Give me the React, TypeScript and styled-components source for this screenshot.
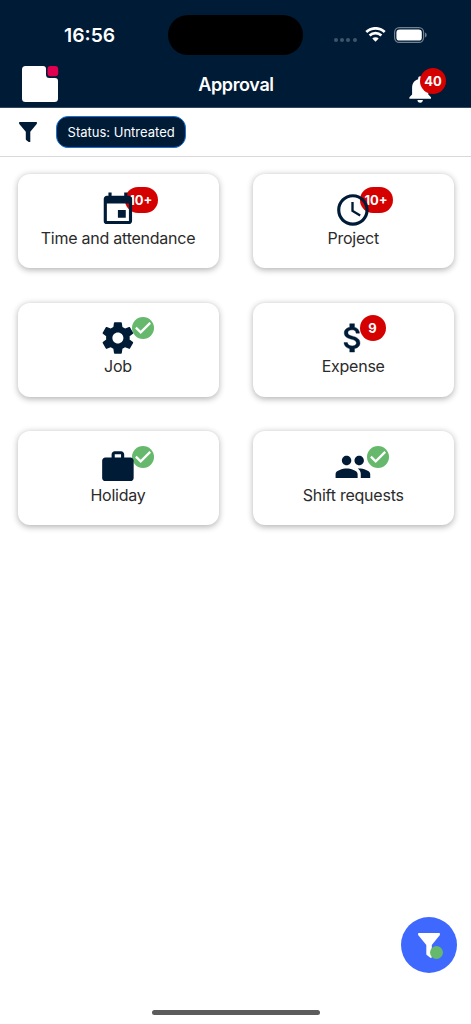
import type { ReactNode } from "react";
import styled, { createGlobalStyle } from "styled-components";
import { MdEvent, MdNotifications, MdPeople, MdWork } from "react-icons/md";

const NAVY = "#001b36";

interface Tile {
  label: string;
  icon: ReactNode;
  count?: string;
}

const ClockIcon = () => (
  <svg viewBox="0 0 24 24" fill="currentColor">
    <path d="M11.99 2C6.47 2 2 6.48 2 12s4.47 10 9.99 10C17.52 22 22 17.52 22 12S17.52 2 11.99 2zM12 20c-4.42 0-8-3.58-8-8s3.58-8 8-8 8 3.58 8 8-3.58 8-8 8z" />
    <path d="M12.5 7H11v6l5.25 3.15.75-1.23-4.5-2.67z" />
  </svg>
);

const GearIcon = () => (
  <svg viewBox="0 0 24 24" fill="currentColor">
    <path d="M19.43 12.98c.04-.32.07-.64.07-.98s-.03-.66-.07-.98l2.11-1.65c.19-.15.24-.42.12-.64l-2-3.46c-.12-.22-.39-.3-.61-.22l-2.49 1c-.52-.4-1.08-.73-1.69-.98l-.38-2.65C14.46 2.18 14.25 2 14 2h-4c-.25 0-.46.18-.49.42l-.38 2.65c-.61.25-1.17.59-1.69.98l-2.49-1c-.23-.09-.49 0-.61.22l-2 3.46c-.13.22-.07.49.12.64l2.11 1.65c-.04.32-.07.65-.07.98s.03.66.07.98l-2.11 1.65c-.19.15-.24.42-.12.64l2 3.46c.12.22.39.3.61.22l2.49-1c.52.4 1.08.73 1.69.98l.38 2.65c.03.24.24.42.49.42h4c.25 0 .46-.18.49-.42l.38-2.65c.61-.25 1.17-.59 1.69-.98l2.49 1c.23.09.49 0 .61-.22l2-3.46c.12-.22.07-.49-.12-.64l-2.11-1.65zM12 15.5c-1.93 0-3.5-1.57-3.5-3.5s1.57-3.5 3.5-3.5 3.5 1.57 3.5 3.5-1.57 3.5-3.5 3.5z" />
  </svg>
);

const DollarIcon = () => (
  <svg viewBox="0 0 24 24" fill="currentColor" stroke="currentColor" strokeWidth=".25">
    <path d="M11.8 10.9c-2.27-.59-3-1.2-3-2.15 0-1.09 1.01-1.85 2.7-1.85 1.78 0 2.44.85 2.5 2.1h2.21c-.07-1.72-1.12-3.3-3.21-3.81V3h-3v2.16c-1.94.42-3.5 1.68-3.5 3.61 0 2.31 1.91 3.46 4.7 4.13 2.5.6 3 1.48 3 2.41 0 .69-.49 1.79-2.7 1.79-2.06 0-2.87-.92-2.98-2.1h-2.2c.12 2.19 1.76 3.42 3.68 3.83V21h3v-2.15c1.95-.37 3.5-1.5 3.5-3.55 0-2.84-2.43-3.81-4.7-4.4z" />
  </svg>
);

const FunnelIcon = ({ width }: { width: number }) => (
  <svg width={width} viewBox="0 0 18 20.5" fill="currentColor">
    <path d="M.7 0h16.6c.6 0 .9.6.6 1.1v.6L11.3 9.8v9.8c0 .7-.6 1-1.2.7L7.4 18.2c-.4-.3-.6-.6-.6-1.1V9.8L.1 1.7v-.6C-.2.6.1 0 .7 0z" />
  </svg>
);

const Logo = () => (
  <svg width="37" height="37" viewBox="0 0 37 37">
    <path
      fill="#fff"
      d="M3.5 0H21a3 3 0 0 1 3 3v5.5a3.5 3.5 0 0 0 3.5 3.5H33a3 3 0 0 1 3 3v17.5a3.5 3.5 0 0 1-3.5 3.5h-29A3.5 3.5 0 0 1 0 32.5v-29A3.5 3.5 0 0 1 3.5 0z"
    />
    <rect x="25.5" y="0" width="10.7" height="10.3" rx="3" fill="#e0004f" />
  </svg>
);

const WifiIcon = () => (
  <svg width="21" height="15" viewBox="0 0 21 15" fill="none" stroke="#fff">
    <path d="M1.3 5a13.3 13.3 0 0 1 18.4 0" strokeWidth="2.7" />
    <path d="M4.6 8.5a8.5 8.5 0 0 1 11.8 0" strokeWidth="2.6" />
    <path d="M10.5 14.8 7.3 11.6a4.6 4.6 0 0 1 6.4 0z" fill="#fff" stroke="none" />
  </svg>
);

const BatteryIcon = () => (
  <svg width="33" height="16" viewBox="0 0 33 16">
    <rect x=".6" y=".6" width="29" height="14.8" rx="4.6" fill="none" stroke="#72808f" strokeWidth="1.2" />
    <rect x="2.4" y="2.4" width="25.4" height="11.2" rx="3.2" fill="#fff" />
    <path d="M31 5.5c1.1.4 1.7 1.4 1.7 2.5s-.6 2.1-1.7 2.5z" fill="#72808f" />
  </svg>
);

const CheckIcon = () => (
  <svg width="22" height="22" viewBox="0 0 22 22">
    <circle cx="11" cy="11" r="11" fill="#66b96c" />
    <path d="M3.9 10.6 8.7 15.3 18.2 5.9" fill="none" stroke="#fff" strokeWidth="2.3" />
  </svg>
);

const tiles: Tile[] = [
  { label: "Time and attendance", icon: <MdEvent />, count: "10+" },
  { label: "Project", icon: <ClockIcon />, count: "10+" },
  { label: "Job", icon: <GearIcon /> },
  { label: "Expense", icon: <DollarIcon />, count: "9" },
  { label: "Holiday", icon: <MdWork /> },
  { label: "Shift requests", icon: <MdPeople /> },
];

const App = () => {
  return (
    <>
      <GlobalStyle />
      <Screen>
        <Header>
          <StatusBar>
            <Time>16:56</Time>
            <Island />
            <Signals>
              <Dots>
                <i />
                <i />
                <i />
                <i />
              </Dots>
              <WifiIcon />
              <BatteryIcon />
            </Signals>
          </StatusBar>
          <NavBar>
            <Logo />
            <Title>Approval</Title>
            <Bell>
              <MdNotifications />
              <BellCount>40</BellCount>
            </Bell>
          </NavBar>
        </Header>
        <FilterBar>
          <FunnelIcon width={18} />
          <Chip>Status: Untreated</Chip>
        </FilterBar>
        <Grid>
          {tiles.map(({ label, icon, count }) => (
            <Card key={label}>
              <IconBox>
                {count ? (
                  <Count $wide={count.length > 1}>{count}</Count>
                ) : (
                  <Done>
                    <CheckIcon />
                  </Done>
                )}
                <Glyph>{icon}</Glyph>
              </IconBox>
              <Label>{label}</Label>
            </Card>
          ))}
        </Grid>
        <Fab>
          <FunnelIcon width={22} />
          <FabDot />
        </Fab>
        <HomeIndicator />
      </Screen>
    </>
  );
};

export default App;

const GlobalStyle = createGlobalStyle`
  * {
    box-sizing: border-box;
  }
  body {
    margin: 0;
    background: #fff;
    font-family: Inter, "Liberation Sans", sans-serif;
  }
  svg {
    display: block;
    flex: none;
  }
`;

const Screen = styled.div`
  position: relative;
  height: 1024px;
  overflow: hidden;
  background: #fff;
`;

const Header = styled.header`
  height: 108px;
  background: ${NAVY};
  border-bottom: 1px solid #33485d;
  color: #fff;
`;

const StatusBar = styled.div`
  display: grid;
  grid-template-columns: 168.3px 134.4px 1fr;
  height: 60px;
  padding-top: 15px;
`;

const Time = styled.span`
  padding-left: 64px;
  font-size: 19.3px;
  font-weight: 600;
  line-height: 41px;
`;

const Island = styled.div`
  height: 39.5px;
  border-radius: 20px;
  background: #000;
`;

const Signals = styled.div`
  display: flex;
  align-items: center;
  height: 39px;
  padding-left: 31px;

  svg + svg {
    margin-left: 8px;
  }
`;

const Dots = styled.div`
  display: flex;
  gap: 2.4px;
  margin: 11px 8.3px 0 0;

  i {
    width: 4px;
    height: 4px;
    border-radius: 50%;
    background: #40546a;
  }
`;

const NavBar = styled.div`
  display: grid;
  grid-template-columns: 60px 1fr 60px;
  align-items: center;
  height: 47px;
  padding: 2px 18.5px 0 21.5px;
`;

const Title = styled.h1`
  margin: 0;
  font-size: 18px;
  font-weight: 600;
  letter-spacing: -0.37px;
  text-align: center;
  text-indent: -2px;
`;

const Bell = styled.div`
  position: relative;
  padding: 9px 0 0 11.6px;

  svg {
    width: 32.4px;
    height: 32.4px;
  }
`;

const BellCount = styled.span`
  position: absolute;
  top: 4.5px;
  left: 27.6px;
  width: 26px;
  height: 26px;
  border-radius: 13px;
  background: #d50000;
  font-size: 13px;
  font-weight: 700;
  line-height: 26px;
  text-align: center;
`;

const FilterBar = styled.div`
  display: flex;
  align-items: center;
  gap: 19.2px;
  height: 49px;
  padding-left: 18.7px;
  border-bottom: 1px solid #d9d9d9;
  color: ${NAVY};
`;

const Chip = styled.div`
  width: 130.5px;
  height: 32.5px;
  border: 1px solid #1673d6;
  border-radius: 12px;
  background: ${NAVY};
  color: #fff;
  font-size: 13px;
  line-height: 31px;
  text-align: center;
`;

const Grid = styled.main`
  display: grid;
  grid-template-columns: 201px 201px;
  grid-auto-rows: 94px;
  gap: 34.4px 34.2px;
  padding: 17.3px 17px 0 17.5px;
`;

const Card = styled.section`
  display: flex;
  flex-direction: column;
  align-items: center;
  padding-top: 16.8px;
  border-radius: 12px;
  background: #fff;
  box-shadow: 0 1.5px 6px rgba(0, 0, 0, 0.3);
`;

const IconBox = styled.div`
  position: relative;
  width: 37.8px;
  height: 37.8px;
`;

const Glyph = styled.div`
  position: relative;
  color: ${NAVY};

  svg {
    width: 37.8px;
    height: 37.8px;
  }
`;

const Count = styled.span<{ $wide: boolean }>`
  position: absolute;
  top: -4px;
  left: 26px;
  width: ${props => (props.$wide ? 32.5 : 25.5)}px;
  height: 25.5px;
  border-radius: 13px;
  background: #d50000;
  color: #fff;
  font-size: 13px;
  font-weight: 700;
  line-height: 26px;
  text-align: center;
  text-indent: -1px;
`;

const Done = styled.span`
  position: absolute;
  top: -2px;
  left: 33px;
`;

const Label = styled.span`
  margin-top: -1px;
  color: #2b2b2b;
  font-size: 16px;
  letter-spacing: -0.24px;
  line-height: 20px;
`;

const Fab = styled.button`
  position: absolute;
  top: 917.4px;
  left: 401px;
  display: grid;
  place-items: center;
  width: 56px;
  height: 56px;
  padding: 0;
  border: 0;
  border-radius: 50%;
  background: #3f68ff;
  color: #fff;
`;

const FabDot = styled.span`
  position: absolute;
  top: 29px;
  left: 29px;
  width: 13px;
  height: 13px;
  border-radius: 50%;
  background: #66b96c;
`;

const HomeIndicator = styled.div`
  position: absolute;
  top: 1009.5px;
  left: 152px;
  width: 168px;
  height: 5.5px;
  border-radius: 3px;
  background: #5c5c5c;
`;
